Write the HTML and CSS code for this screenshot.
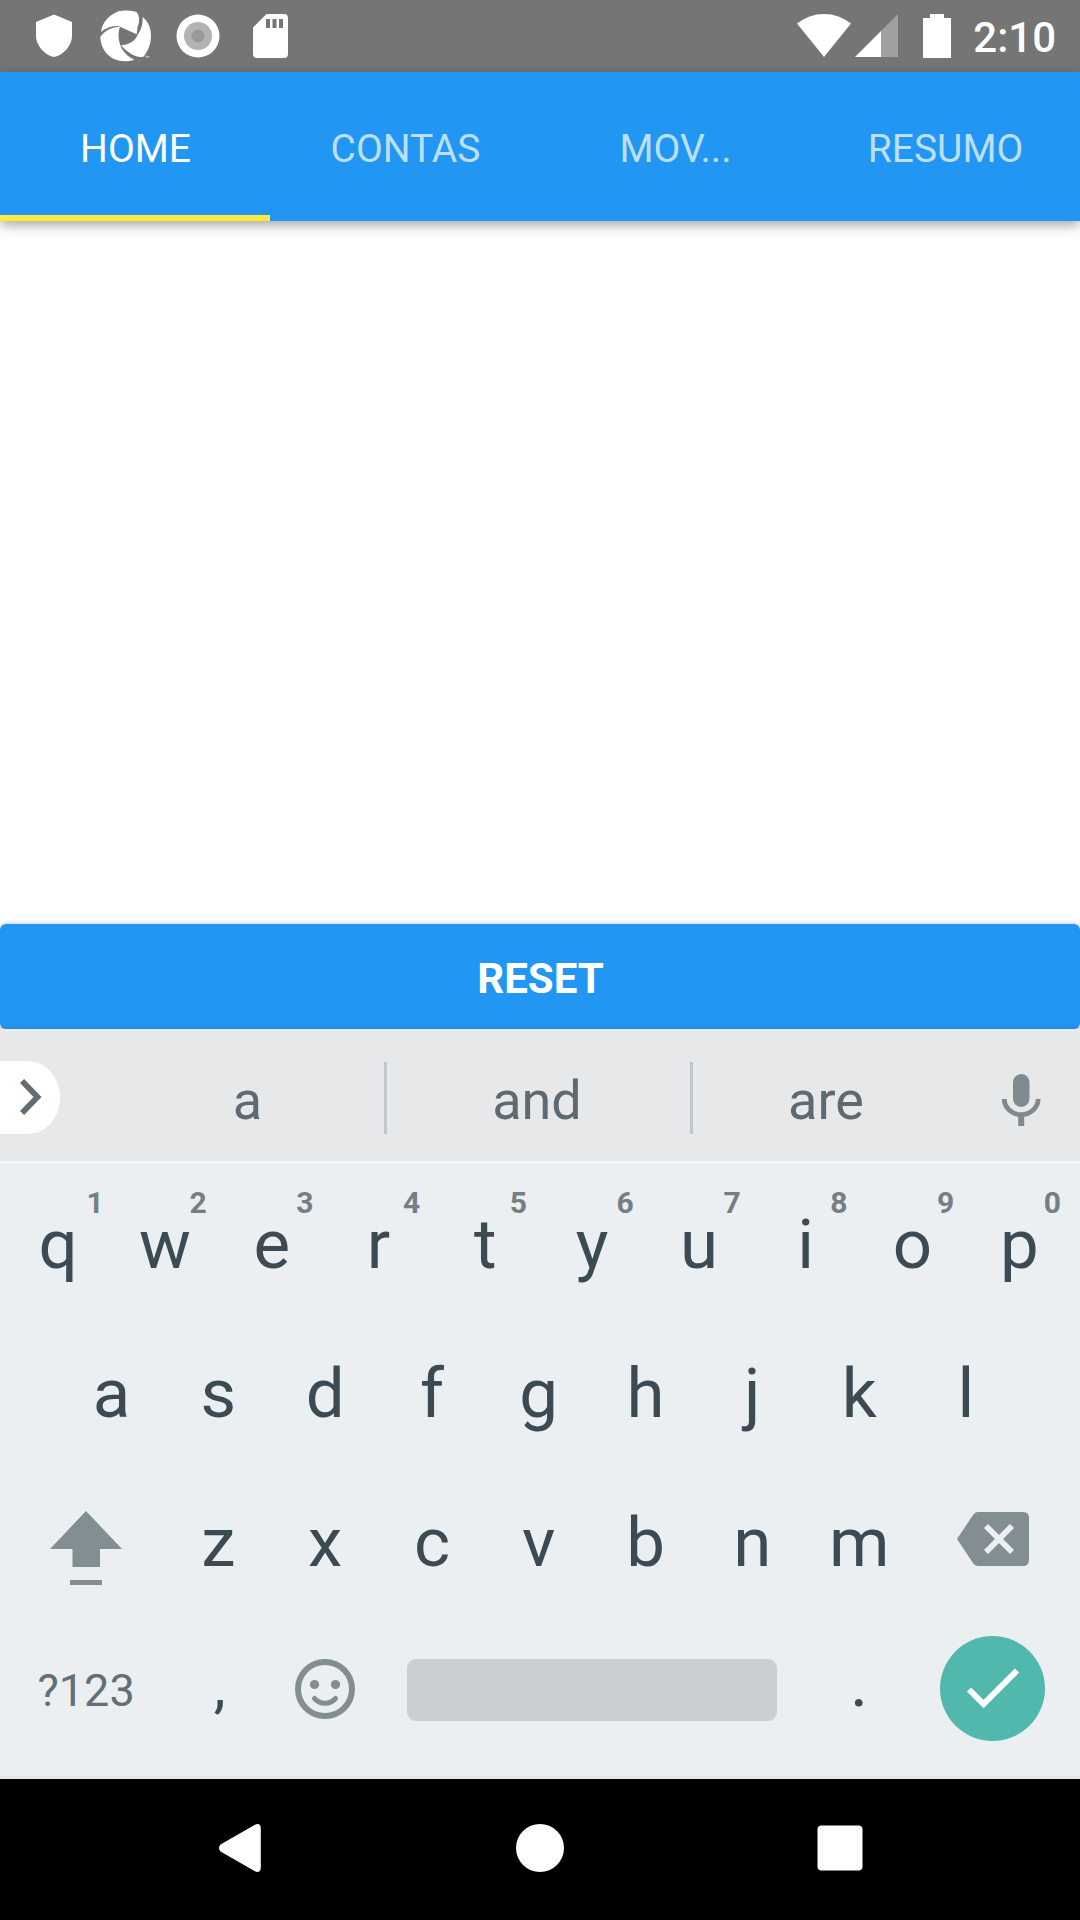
FILE: index.html
```html
<!DOCTYPE html>
<html lang="pt">
<head>
<meta charset="utf-8">
<title>Home</title>
<link rel="stylesheet" href="styles.css">
</head>
<body>
<div class="screen">
  <div class="status">
    <div class="status-left">
      <svg width="36" height="44" viewBox="0 0 36 44"><path fill="#fff" d="M18 .5 36 8v14c0 9-8 19-18 21C8 41 0 31 0 22V8z"/></svg>
      <svg width="52" height="52" viewBox="300 31 156 156">
        <path fill="#fff" d="M351 37Q358 32 377 32.500Q398 32 410 37C418 47 420 67 413 80L410 104L355 79C331 78 317 87 303 96C307 69 326 47 351 37Z"/>
        <path fill="#fff" d="M428 51C446 68 453 85 453 109C453 136 442 158 430 171C412 175 386 164 363 137C382 135 405 127 413 105C421 94 429 77 428 51Z"/>
        <path fill="#fff" d="M301 112C312 94 334 82 360 81C353 101 355 120 361 137C368 157 385 172 403 180C385 187 361 186 344 179C318 167 302 143 301 112Z"/>
        <path fill="none" stroke="#ddd" stroke-width="2" d="M435 169h5m-2.500 0v5m5 0v-5l2 2 2-2v5"/>
      </svg>
      <svg width="44" height="44" viewBox="0 0 44 44"><circle cx="22" cy="22" r="21.500" fill="#fff"/><circle cx="22" cy="22" r="14" fill="#b3b3b3"/><circle cx="22" cy="22" r="6.500" fill="#999"/></svg>
      <svg width="35" height="44" viewBox="0 0 35 44"><path fill="#fff" fill-rule="evenodd" d="M13.500 0H31q4 0 4 4v36q0 4-4 4H4q-4 0-4-4V13.500zM13 5v9h4V5zm6.500 0v9h4V5zm6.500 0v9h4V5z"/></svg>
    </div>
    <div class="status-right">
      <svg width="54" height="44" viewBox="0 0 54 44"><path fill="#fff" d="M0 9.500Q12 0 27 0t27 9.500L27 43z"/></svg>
      <svg width="43" height="44" viewBox="0 0 43 44"><path fill="#a0a0a0" d="M43 0v43H26V17z"/><path fill="#fff" d="M26 17v26H0z"/></svg>
      <svg class="battery" width="28" height="44" viewBox="0 0 28 44"><path fill="#fff" d="M7 0h14v4h7v40H0V4h7z"/></svg>
      <span class="clock">2:10</span>
    </div>
  </div>
  <div class="tabs">
    <div class="tab active">HOME</div>
    <div class="tab">CONTAS</div>
    <div class="tab">MOV...</div>
    <div class="tab">RESUMO</div>
  </div>
  <div class="content"></div>
  <div class="reset">RESET</div>
  <div class="keyboard">
    <div class="suggestions">
      <div class="expand"><svg width="22" height="36" viewBox="0 0 22 36"><path d="M2 2 17.500 18 2 34" fill="none" stroke="#626d73" stroke-width="5.800"/></svg></div>
      <div class="word first">a</div>
      <div class="word middle">and</div>
      <div class="word last">are</div>
      <div class="mic"><svg width="40" height="54" viewBox="0 0 40 54"><rect x="12" y="1" width="16.500" height="33" rx="8.250" fill="#7f8a8f"/><path d="M3.300 26a16.900 15.700 0 0 0 33.800 0" fill="none" stroke="#7f8a8f" stroke-width="4.800"/><path d="M17.200 43h6v10h-6z" fill="#7f8a8f"/></svg></div>
    </div>
    <div class="keys">
      <div class="row">
        <div class="key">q<span class="hint one">1</span></div>
        <div class="key">w<span class="hint">2</span></div>
        <div class="key">e<span class="hint">3</span></div>
        <div class="key">r<span class="hint">4</span></div>
        <div class="key">t<span class="hint">5</span></div>
        <div class="key">y<span class="hint">6</span></div>
        <div class="key">u<span class="hint">7</span></div>
        <div class="key">i<span class="hint">8</span></div>
        <div class="key">o<span class="hint">9</span></div>
        <div class="key">p<span class="hint">0</span></div>
      </div>
      <div class="row">
        <div class="key">a</div><div class="key">s</div><div class="key">d</div><div class="key">f</div><div class="key">g</div><div class="key">h</div><div class="key">j</div><div class="key">k</div><div class="key">l</div>
      </div>
      <div class="row">
        <div class="key wide"><svg class="shift" width="72" height="76" viewBox="0 0 72 76"><path fill="#838e92" d="M36 1 72 39H50v18H22.500V39H0zM20 70h32v5H20z"/></svg></div>
        <div class="key">z</div><div class="key">x</div><div class="key">c</div><div class="key">v</div><div class="key">b</div><div class="key">n</div><div class="key">m</div>
        <div class="key wide"><svg class="delete" width="72" height="54" viewBox="0 0 72 54"><path fill="#838e92" d="M20.500 0H66q6 0 6 6v42q0 6-6 6H20.500q-2.500 0-4.500-3L0 27 16 3q2-3 4.500-3z"/><path d="m29 14 26 26m0-26L29 40" stroke="#ebeff2" stroke-width="5.800"/></svg></div>
      </div>
      <div class="row">
        <div class="key wide symbols">?123</div>
        <div class="key punct comma">,</div>
        <div class="key"><svg class="emoji" width="60" height="60" viewBox="0 0 60 60"><circle cx="30" cy="30" r="27" fill="none" stroke="#838e92" stroke-width="6"/><circle cx="19.500" cy="25.500" r="4.600" fill="#838e92"/><circle cx="40.500" cy="25.500" r="4.600" fill="#838e92"/><path d="M19.500 39.500Q24 44.300 30 44.300T40.500 39.500" fill="none" stroke="#838e92" stroke-width="5" stroke-linecap="round"/></svg></div>
        <div class="key space"><div class="bar"></div></div>
        <div class="key punct">.</div>
        <div class="key wide"><div class="enter"><svg width="54" height="42" viewBox="0 0 54 42"><path d="M3 21.500 17.500 36 51 2.500" fill="none" stroke="#fff" stroke-width="6"/></svg></div></div>
      </div>
    </div>
  </div>
  <div class="nav">
    <svg width="48" height="48" viewBox="0 0 48 48"><path fill="#fff" d="M4.500 20.500 38.500 1Q44.800-2 44.800 5v38q0 7-6.300 4L4.500 27.500q-3-3.500 0-7z"/></svg>
    <svg width="48" height="48" viewBox="0 0 48 48"><circle cx="24" cy="24" r="24" fill="#fff"/></svg>
    <svg width="48" height="48" viewBox="0 0 48 48"><rect x="1.500" y="1.500" width="45" height="45" rx="4" fill="#fff"/></svg>
  </div>
</div>
</body>
</html>
```
FILE: styles.css
```css
* { box-sizing: border-box; }
body { margin: 0; font-family: Roboto, "Liberation Sans", sans-serif; background: #fff; }
svg { display: block; flex: none; }
.screen { width: 1080px; height: 1920px; display: flex; flex-direction: column; overflow: hidden; }

.status { height: 72px; background: #757575; display: flex; justify-content: space-between; align-items: center; padding: 0 24px 0 36px; }
.status-left { display: flex; align-items: center; gap: 26px; }
.status-left svg:nth-child(1) { margin-right: 2px; }
.status-left svg:nth-child(3) { margin: 0 7px 0 -2px; }
.status-right { display: flex; align-items: center; }
.status-right svg:nth-child(2) { margin-left: 4px; }
.battery { margin-left: 25px; }
.clock { color: #fff; font-size: 42px; font-weight: 500; line-height: 48px; padding-top: 4px; margin-left: 22px; }

.tabs { height: 149px; background: #2196f3; display: flex; box-shadow: 0 4px 12px rgba(0,0,0,.36); }
.tab { width: 270px; display: flex; align-items: center; justify-content: center; padding: 10px 0 0 1px; border-bottom: 6px solid transparent; color: #bcdffb; font-size: 39px; }
.tab.active { color: #fff; border-bottom-color: #ffeb3b; }

.content { flex: 1; }
.reset { height: 105px; background: #2196f3; border-radius: 6px; box-shadow: 0 1px 6px rgba(0,0,0,.34); color: #fff; font-size: 42px; font-weight: 700; display: flex; align-items: center; justify-content: center; padding: 4px 0 0 1px; }

.keyboard { height: 750px; background: #ebeff2; box-shadow: 0 0 5px rgba(0,0,0,.14); border-bottom: 3px solid #e4e8eb; }
.suggestions { height: 135px; background: #e6e8ea; border-top: 3px solid #ecebea; border-bottom: 3px solid #f5f7f9; display: flex; align-items: center; color: #5d6a71; font-size: 54px; }
.expand { width: 60px; height: 73px; margin-top: 1px; background: #fff; border-radius: 0 32px 32px 0 / 0 36px 36px 0; display: flex; align-items: center; padding-left: 20px; }
.word { height: 72px; line-height: 78px; text-align: center; margin-top: 3px; }
.first { width: 324px; padding-left: 51px; }
.middle { width: 309px; padding-right: 3px; border: solid #c1c8cc; border-width: 0 3px; }
.last { width: 267px; padding-right: 1px; }
.mic { width: 120px; display: flex; justify-content: center; padding: 6px 0 0 2px; }

.keys { padding: 6px 6px 0; }
.row { height: 149px; display: flex; justify-content: center; }
.key { position: relative; width: 106.8px; display: flex; align-items: center; justify-content: center; color: #3c4b53; font-size: 69px; padding-right: 2.500px; }
.wide { width: 160.2px; padding-right: 0; }
.hint { position: absolute; top: 18px; right: 13px; font-size: 30px; line-height: 30px; font-weight: 700; color: #747f85; }
.one { right: 9px; }
.shift { margin-top: 11px; }
.delete { margin: 0 1px 7px 0; }
.symbols { font-size: 45px; color: #626f75; padding-bottom: 2px; }
.punct { padding-bottom: 18px; }
.comma { font-size: 60px; padding: 0 0 12px; }
.emoji { margin: 0 0 5px; }
.space { width: 427.2px; }
.bar { width: 370px; height: 62px; margin: 0 0 3px; border-radius: 9px; background: #cacfd2; }
.enter { width: 105px; height: 105px; margin: 0 2px 6px 0; border-radius: 50%; background: #51b8ae; display: flex; align-items: center; justify-content: center; }

.nav { height: 141px; background: #000; display: flex; align-items: center; justify-content: space-between; padding: 0 216px 3px; }
```
